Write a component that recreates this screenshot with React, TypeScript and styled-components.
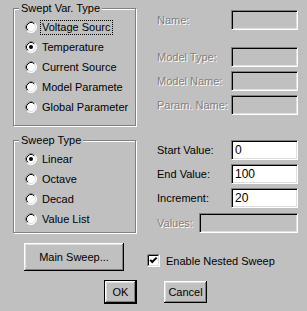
import * as React from "react";
import styled, { createGlobalStyle } from "styled-components";

const GlobalStyle = createGlobalStyle`
  * { box-sizing: border-box; }
  body {
    margin: 0;
    background: #c0c0c0;
  }
`;

const Dialog = styled.div`
  width: 307px;
  height: 311px;
  background: #c0c0c0;
  padding: 8px 9px 0 13px;
  font-family: "Liberation Sans", Arial, sans-serif;
  font-size: 11px;
  color: #000;
`;

const Grid = styled.div`
  display: grid;
  grid-template-columns: 123px 1fr;
  column-gap: 21px;
  row-gap: 14px;
`;

const Group = styled.div<{ $h: number }>`
  position: relative;
  height: ${(p) => p.$h}px;
  border: 1px solid #808080;
  box-shadow: 1px 1px 0 #fff, inset 1px 1px 0 #fff;
  padding: 8px 0 0 11px;
`;

const GroupTitle = styled.div`
  position: absolute;
  top: -8px;
  left: 5px;
  padding: 0 2px;
  line-height: 14px;
  background: #c0c0c0;
`;

const RadioRow = styled.div`
  display: flex;
  align-items: center;
  height: 20px;
  gap: 4px;
  white-space: nowrap;
`;

const RadioLabel = styled.span<{ $focus?: boolean }>`
  padding: 0 1px;
  line-height: 13px;
  outline: ${(p) => (p.$focus ? "1px dotted #000" : "none")};
`;

const Fields = styled.div<{ $pt: number }>`
  display: flex;
  flex-direction: column;
  padding-top: ${(p) => p.$pt}px;
`;

const FieldRow = styled.div<{ $mt?: number }>`
  display: flex;
  align-items: center;
  justify-content: space-between;
  height: 20px;
  margin-top: ${(p) => p.$mt ?? 0}px;
`;

const Label = styled.span<{ $disabled?: boolean }>`
  color: ${(p) => (p.$disabled ? "#808080" : "#000")};
  text-shadow: ${(p) => (p.$disabled ? "1px 1px 0 #fff" : "none")};
  white-space: nowrap;
`;

const Edit = styled.div<{ $disabled?: boolean; $w?: number }>`
  width: ${(p) => p.$w ?? 67}px;
  height: 20px;
  background: ${(p) => (p.$disabled ? "#c0c0c0" : "#fff")};
  border: 1px solid;
  border-color: #808080 #fff #fff #808080;
  box-shadow: inset 1px 1px 0 #000, inset -1px -1px 0 #dfdfdf;
  padding: 0 0 0 3px;
  line-height: 18px;
  font-size: 12px;
`;

const BottomRow = styled.div`
  display: flex;
  align-items: flex-start;
  margin-top: 10px;
  padding-left: 11px;
`;

const Button = styled.button<{ $w: number; $h: number; $default?: boolean }>`
  width: ${(p) => p.$w}px;
  height: ${(p) => p.$h}px;
  padding: 0;
  font: inherit;
  color: #000;
  background: #c0c0c0;
  border: ${(p) => (p.$default ? "1px solid #000" : "none")};
  box-shadow: inset -1px -1px 0 #000, inset 1px 1px 0 #fff,
    inset -2px -2px 0 #808080, inset 2px 2px 0 #dfdfdf;
`;

const CheckRow = styled.div`
  display: flex;
  align-items: center;
  gap: 6px;
  margin: 11px 0 0 23px;
  height: 13px;
`;

const ButtonRow = styled.div`
  display: flex;
  align-items: flex-start;
  gap: 27px;
  margin-top: 9px;
  padding-left: 91px;
`;

const CancelWrap = styled.div`
  margin-top: 1px;
`;

const Radio = ({ checked }: { checked?: boolean }) => (
  <svg width="12" height="12" viewBox="0 0 12 12">
    <circle cx="6" cy="6" r="5.5" fill="#fff" stroke="#fff" />
    <path d="M2.11 9.89 A5.5 5.5 0 0 1 9.89 2.11" fill="none" stroke="#808080" />
    <path d="M2.82 9.18 A4.5 4.5 0 0 0 9.18 2.82" fill="none" stroke="#dfdfdf" />
    <path d="M2.82 9.18 A4.5 4.5 0 0 1 9.18 2.82" fill="none" stroke="#000" />
    {checked && <circle cx="6" cy="6" r="2" fill="#000" />}
  </svg>
);

const CheckBox = () => (
  <svg width="13" height="13" viewBox="0 0 13 13">
    <rect x="0" y="0" width="13" height="13" fill="#fff" />
    <path d="M0.5 12.5 V0.5 H12.5" fill="none" stroke="#808080" />
    <path d="M1.5 11.5 V1.5 H11.5" fill="none" stroke="#000" />
    <path d="M0.5 12.5 H12.5 V0.5" fill="none" stroke="#fff" />
    <path d="M1.5 11.5 H11.5 V1.5" fill="none" stroke="#dfdfdf" />
    <polyline points="3.2,5.8 5.2,8 9.6,3.6" fill="none" stroke="#000" strokeWidth="2" />
  </svg>
);

const sweptTypes = ["Voltage Sourc", "Temperature", "Current Source", "Model Paramete", "Global Parameter"];
const sweepTypes = ["Linear", "Octave", "Decad", "Value List"];

export default function App() {
  return (
    <Dialog>
      <GlobalStyle />
      <Grid>
        <Group $h={118}>
          <GroupTitle>Swept Var. Type</GroupTitle>
          {sweptTypes.map((t, i) => (
            <RadioRow key={t}>
              <Radio checked={i === 1} />
              <RadioLabel $focus={i === 0}>{t}</RadioLabel>
            </RadioRow>
          ))}
        </Group>
        <Fields $pt={2}>
          <FieldRow>
            <Label $disabled>Name:</Label>
            <Edit $disabled />
          </FieldRow>
          <FieldRow $mt={17}>
            <Label $disabled>Model Type:</Label>
            <Edit $disabled />
          </FieldRow>
          <FieldRow $mt={4}>
            <Label $disabled>Model Name:</Label>
            <Edit $disabled />
          </FieldRow>
          <FieldRow $mt={4}>
            <Label $disabled>Param. Name:</Label>
            <Edit $disabled />
          </FieldRow>
        </Fields>

        <Group $h={93}>
          <GroupTitle>Sweep Type</GroupTitle>
          {sweepTypes.map((t, i) => (
            <RadioRow key={t}>
              <Radio checked={i === 0} />
              <RadioLabel>{t}</RadioLabel>
            </RadioRow>
          ))}
        </Group>
        <Fields $pt={0}>
          <FieldRow>
            <Label>Start Value:</Label>
            <Edit>0</Edit>
          </FieldRow>
          <FieldRow $mt={4}>
            <Label>End Value:</Label>
            <Edit>100</Edit>
          </FieldRow>
          <FieldRow $mt={4}>
            <Label>Increment:</Label>
            <Edit>20</Edit>
          </FieldRow>
          <FieldRow $mt={5}>
            <Label $disabled>Values:</Label>
            <Edit $disabled $w={99} />
          </FieldRow>
        </Fields>
      </Grid>

      <BottomRow>
        <Button $w={100} $h={28}>Main Sweep...</Button>
        <CheckRow>
          <CheckBox />
          <span>Enable Nested Sweep</span>
        </CheckRow>
      </BottomRow>

      <ButtonRow>
        <Button $w={33} $h={24} $default>OK</Button>
        <CancelWrap>
          <Button $w={43} $h={22}>Cancel</Button>
        </CancelWrap>
      </ButtonRow>
    </Dialog>
  );
}
